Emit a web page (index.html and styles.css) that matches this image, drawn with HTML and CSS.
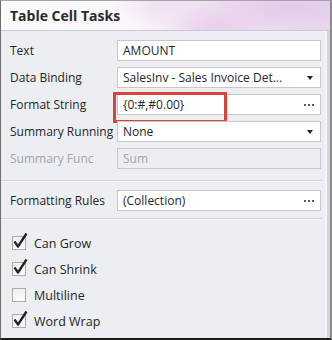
FILE: index.html
```html
<!DOCTYPE html>
<html lang="en">
<head>
    <meta charset="UTF-8">
    <title>Table Cell Tasks</title>
    <link rel="stylesheet" href="styles.css">
</head>
<body>
    <div class="panel">
        <div class="header">Table Cell Tasks</div>
        <div class="content">
            <div class="fields">
                <label class="field-label">Text</label>
                <div class="box">AMOUNT</div>

                <label class="field-label">Data Binding</label>
                <div class="box">SalesInv - Sales Invoice Det...<span class="arrow"></span></div>

                <label class="field-label">Format String</label>
                <div class="box">{0:#,#0.00}<span class="dots"><i></i><i></i><i></i></span><span class="highlight"></span></div>

                <label class="field-label">Summary Running</label>
                <div class="box">None<span class="arrow"></span></div>

                <label class="field-label disabled">Summary Func</label>
                <div class="box disabled">Sum</div>
            </div>
            <hr class="sep first">
            <div class="fields">
                <label class="field-label">Formatting Rules</label>
                <div class="box">(Collection)<span class="dots"><i></i><i></i><i></i></span></div>
            </div>
            <hr class="sep second">
            <div class="checks">
                <div class="check-row">
                    <span class="checkbox">
                        <svg width="18" height="18" viewBox="0 0 18 18"><path d="M2.5 9.5 L6 14.5 L14.5 1.5" fill="none" stroke="#222" stroke-width="2.3" stroke-linejoin="round"/></svg>
                    </span>
                    <span>Can Grow</span>
                </div>
                <div class="check-row">
                    <span class="checkbox">
                        <svg width="18" height="18" viewBox="0 0 18 18"><path d="M2.5 9.5 L6 14.5 L14.5 1.5" fill="none" stroke="#222" stroke-width="2.3" stroke-linejoin="round"/></svg>
                    </span>
                    <span>Can Shrink</span>
                </div>
                <div class="check-row">
                    <span class="checkbox"></span>
                    <span>Multiline</span>
                </div>
                <div class="check-row">
                    <span class="checkbox">
                        <svg width="18" height="18" viewBox="0 0 18 18"><path d="M2.5 9.5 L6 14.5 L14.5 1.5" fill="none" stroke="#222" stroke-width="2.3" stroke-linejoin="round"/></svg>
                    </span>
                    <span>Word Wrap</span>
                </div>
            </div>
        </div>
    </div>
</body>
</html>
```

FILE: styles.css
```css
html, body {
    margin: 0;
    padding: 0;
    background-color: #fff;
}
.panel {
    width: 332px;
    height: 340px;
    box-sizing: border-box;
    border-left: 1px solid #6e6e6e;
    border-top: 1px solid #a4a4a4;
    border-right: 2px solid #8a8a8a;
    border-bottom: 2px solid #1c1c1c;
    background-color: #eceef2;
    box-shadow: inset -3px 0 0 #d4d6da, inset -5px 0 0 #f4f5f7;
    font-family: 'Open Sans', 'Noto Sans', sans-serif;
    font-size: 12px;
    color: #262626;
    overflow: hidden;
}
.header {
    height: 29px;
    line-height: 30px;
    padding-left: 9px;
    border-bottom: 1px solid #c7cad1;
    font-size: 14px;
    font-weight: bold;
    color: #2b2b2b;
    background:
        radial-gradient(ellipse 70px 34px at 215px 26px, rgba(232, 206, 236, 0.95), rgba(255, 255, 255, 0) 75%),
        radial-gradient(ellipse 90px 26px at 290px 6px, rgba(226, 200, 234, 0.95), rgba(255, 255, 255, 0) 85%),
        radial-gradient(ellipse 60px 30px at 160px 4px, rgba(240, 222, 242, 0.9), rgba(255, 255, 255, 0) 80%),
        linear-gradient(90deg, #fbfbfc 0%, #faf6fa 40%, #eddcf0 68%, #e8d6ed 100%);
}
.content {
    padding: 9px 0 0 9px;
}
.fields {
    display: grid;
    grid-template-columns: 107px 204px;
    grid-auto-rows: 21px;
    row-gap: 6px;
}
.field-label {
    display: flex;
    align-items: center;
    white-space: nowrap;
}
.field-label.disabled {
    color: #a3a5a9;
}
.box {
    position: relative;
    display: flex;
    align-items: center;
    box-sizing: border-box;
    padding: 0 5px 0 5px;
    border: 1px solid #c6c8cc;
    background-color: #fff;
    white-space: nowrap;
}
.box.disabled {
    background-color: #eceef2;
    color: #a3a5a9;
}
.arrow {
    margin-left: auto;
    margin-right: 2px;
    width: 0;
    height: 0;
    border-left: 3.5px solid transparent;
    border-right: 3.5px solid transparent;
    border-top: 4px solid #222;
}
.dots {
    margin-left: auto;
    margin-right: 1px;
    display: flex;
    gap: 2px;
}
.dots i {
    width: 2px;
    height: 2px;
    background-color: #222;
    border-radius: 1px;
}
.highlight {
    position: absolute;
    left: -5px;
    top: -3px;
    width: 114px;
    height: 31px;
    box-sizing: border-box;
    border: 3px solid #d9433d;
}
.sep {
    margin: 11px 0 0 -9px;
    width: 321px;
    height: 0;
    border: none;
    border-top: 1px solid #d2d4d9;
    border-bottom: 1px solid #f7f8fa;
}
.sep.first {
    margin-bottom: 8px;
}
.sep.second {
    margin-top: 7px;
    margin-bottom: 10px;
}
.checks {
    display: flex;
    flex-direction: column;
}
.check-row {
    display: flex;
    align-items: center;
    height: 26px;
    font-size: 12.5px;
}
.checkbox {
    position: relative;
    width: 12px;
    height: 12px;
    margin-left: 2px;
    margin-right: 8px;
    border: 1px solid #a9abb0;
    background: linear-gradient(#eef0f2, #fdfdfd);
}
.checkbox svg {
    position: absolute;
    left: -1px;
    top: -5px;
}
```
